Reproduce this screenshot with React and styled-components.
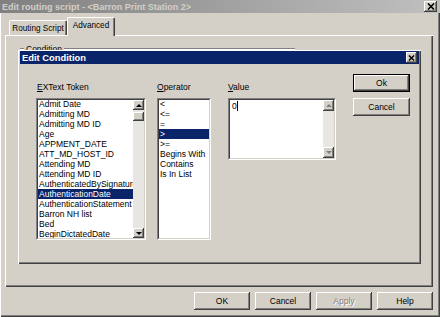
import React from 'react';
import styled, { createGlobalStyle } from 'styled-components';

const face = '#d4d0c8';
const shadow = '#808080';
const dark = '#404040';
const navy = '#0a246a';

const raised = `
  background: ${face};
  box-shadow: inset -1px -1px ${dark}, inset 1px 1px #fff, inset -2px -2px ${shadow}, inset 2px 2px ${face};
`;

const GlobalStyle = createGlobalStyle`
  html, body {
    margin: 0;
    padding: 0;
    background: ${face};
  }
  body {
    font-family: "Liberation Sans", Arial, sans-serif;
    font-size: 8.5px;
    color: #000;
  }
  * {
    box-sizing: border-box;
  }
`;

const Window = styled.div`
  position: relative;
  width: 440px;
  height: 317px;
  display: flex;
  flex-direction: column;
  background: ${face};
  box-shadow: inset 1px 0 #fff, inset -1px -1px ${dark}, inset -2px -2px ${shadow};
`;

const TitleBar = styled.div`
  flex: none;
  height: 13px;
  display: flex;
  align-items: center;
  justify-content: space-between;
  padding: 0 ${p => (p.$active ? 2 : 3)}px 0 2px;
  background: ${p =>
    p.$active ? navy : 'linear-gradient(to right, #808080, #c0c0c0)'};
  color: ${p => (p.$active ? '#fff' : face)};
  font-size: ${p => (p.$active ? 9.4 : 9)}px;
  font-weight: bold;
  white-space: nowrap;
`;

const CloseButton = styled.div`
  ${raised}
  width: ${p => p.$w}px;
  height: ${p => p.$h}px;
  display: flex;
  align-items: center;
  justify-content: center;
  svg {
    display: block;
  }
`;

const Body = styled.div`
  flex: 1;
  display: flex;
  flex-direction: column;
  padding: 4px 7px 7px 5px;
`;

const TabRow = styled.div`
  height: 18px;
  display: flex;
  align-items: flex-end;
  padding-left: 4px;
`;

const Tab = styled.div`
  position: relative;
  width: ${p => p.$w}px;
  height: ${p => (p.$active ? 19 : 15)}px;
  margin-bottom: ${p => (p.$active ? -1 : 0)}px;
  z-index: ${p => (p.$active ? 2 : 0)};
  display: flex;
  align-items: ${p => (p.$active ? 'flex-start' : 'center')};
  justify-content: center;
  padding-top: ${p => (p.$active ? 3 : 0)}px;
  background: ${face};
  border-top: 1px solid #fff;
  border-left: 1px solid #fff;
  border-right: 1px solid ${dark};
  border-radius: 2px 2px 0 0;
  box-shadow: inset -1px 0 ${shadow};
  font-size: 8.2px;
  white-space: nowrap;
`;

const Panel = styled.div`
  position: relative;
  height: 252px;
  background: ${face};
  box-shadow: inset 1px 1px #fff, inset -1px -1px ${dark}, inset -2px -2px ${shadow};
  padding: 9px 0 0 15px;
`;

const GroupHeader = styled.div`
  width: 275px;
  display: flex;
  align-items: center;
`;

const Rule = styled.div`
  flex: ${p => (p.$grow ? 1 : 'none')};
  width: ${p => (p.$grow ? 'auto' : '4px')};
  height: 2px;
  border-top: 1px solid ${shadow};
  border-bottom: 1px solid #fff;
`;

const GroupLabel = styled.span`
  padding: 0 2px;
  line-height: 10px;
`;

const Dialog = styled.div`
  position: absolute;
  left: 13px;
  top: 15px;
  width: 403px;
  height: 214px;
  padding: 1px 2px 2px 2px;
  display: flex;
  flex-direction: column;
  background: ${face};
  box-shadow: inset 1px 1px #fff, inset -1px -1px ${dark}, inset -2px -2px ${shadow};
`;

const DialogContent = styled.div`
  display: flex;
  align-items: flex-start;
  padding: 10px 0 0 16px;
`;

const Column = styled.div`
  width: ${p => p.$w}px;
  margin-left: ${p => p.$ml || 0}px;
  margin-top: 8px;
  display: flex;
  flex-direction: column;
`;

const FieldLabel = styled.div`
  height: 10px;
  line-height: 10px;
  margin-bottom: 6px;
  white-space: nowrap;
  padding-left: ${p => p.$pl || 0}px;
`;

const Field = styled.div`
  height: ${p => p.$h}px;
  border: 1px solid;
  border-color: ${shadow} #fff #fff ${shadow};
`;

const FieldInner = styled.div`
  height: 100%;
  display: flex;
  background: #fff;
  border: 1px solid;
  border-color: ${dark} ${face} ${face} ${dark};
  overflow: hidden;
`;

const Items = styled.div`
  flex: 1;
  min-width: 0;
  margin-top: -1px;
`;

const Item = styled.div`
  height: 10px;
  line-height: 10px;
  padding-left: 1px;
  white-space: nowrap;
  overflow: hidden;
  background: ${p => (p.$selected ? navy : 'transparent')};
  color: ${p => (p.$selected ? '#fff' : '#000')};
`;

const TextArea = styled.div`
  flex: 1;
  padding: 1px 0 0 2px;
  display: flex;
  align-items: flex-start;
  line-height: 10px;
`;

const Caret = styled.span`
  display: inline-block;
  width: 1px;
  height: 10px;
  background: #000;
`;

const ScrollBar = styled.div`
  flex: none;
  width: 11px;
  display: flex;
  flex-direction: column;
  background: #e8e6e2;
`;

const ScrollButton = styled.div`
  ${raised}
  height: ${p => p.$h || 10}px;
  margin-top: ${p => p.$mt || 0}px;
  display: flex;
  align-items: center;
  justify-content: center;
`;

const Track = styled.div`
  flex: 1;
`;

const Arrow = styled.div`
  width: 0;
  height: 0;
  border-left: 3px solid transparent;
  border-right: 3px solid transparent;
  border-${p => (p.$dir === 'up' ? 'bottom' : 'top')}: 3px solid
    ${p => (p.$disabled ? shadow : '#000')};
`;

const ButtonColumn = styled.div`
  width: 57px;
  margin-left: 17px;
  display: flex;
  flex-direction: column;
  gap: 6px;
`;

const Button = styled.div`
  ${raised}
  width: ${p => p.$w}px;
  height: 18px;
  display: flex;
  align-items: center;
  justify-content: center;
  border: ${p => (p.$default ? '1px solid #000' : 'none')};
  color: ${p => (p.$disabled ? shadow : '#000')};
  text-shadow: ${p => (p.$disabled ? '1px 1px #fff' : 'none')};
`;

const Footer = styled.div`
  display: flex;
  justify-content: flex-end;
  gap: 5px;
  margin-top: 5px;
`;

const tokens = [
  'Admit Date',
  'Admitting MD',
  'Admitting MD ID',
  'Age',
  'APPMENT_DATE',
  'ATT_MD_HOST_ID',
  'Attending MD',
  'Attending MD ID',
  'AuthenticatedBySignature',
  'AuthenticationDate',
  'AuthenticationStatement',
  'Barron NH list',
  'Bed',
  'BeginDictatedDate',
];

const operators = ['<', '<=', '=', '>', '>=', 'Begins With', 'Contains', 'Is In List'];

const CloseX = ({ size }) => (
  <svg width={size} height={size - 1} viewBox="0 0 8 7">
    <path d="M1 0.5 L7 6.5 M7 0.5 L1 6.5" stroke="#000" strokeWidth="1.6" />
  </svg>
);

const App = () => (
  <>
    <GlobalStyle />
    <Window>
      <TitleBar>
        <span>Edit routing script - &lt;Barron Print Station 2&gt;</span>
        <CloseButton $w={13} $h={11}>
          <CloseX size={8} />
        </CloseButton>
      </TitleBar>
      <Body>
        <TabRow>
          <Tab $w={58}>Routing Script</Tab>
          <Tab $w={48} $active>
            Advanced
          </Tab>
        </TabRow>
        <Panel>
          <GroupHeader>
            <Rule />
            <GroupLabel>Condition</GroupLabel>
            <Rule $grow />
          </GroupHeader>

          <Dialog>
            <TitleBar $active>
              <span>Edit Condition</span>
              <CloseButton $w={11} $h={11}>
                <CloseX size={7} />
              </CloseButton>
            </TitleBar>
            <DialogContent>
              <Column $w={110}>
                <FieldLabel $pl={1}>
                  <u>E</u>XText Token
                </FieldLabel>
                <Field $h={142}>
                  <FieldInner>
                    <Items>
                      {tokens.map(t => (
                        <Item key={t} $selected={t === 'AuthenticationDate'}>
                          {t}
                        </Item>
                      ))}
                    </Items>
                    <ScrollBar>
                      <ScrollButton>
                        <Arrow $dir="up" />
                      </ScrollButton>
                      <ScrollButton $h={9} $mt={2} />
                      <Track />
                      <ScrollButton>
                        <Arrow $dir="down" />
                      </ScrollButton>
                    </ScrollBar>
                  </FieldInner>
                </Field>
              </Column>

              <Column $w={54} $ml={11}>
                <FieldLabel>
                  <u>O</u>perator
                </FieldLabel>
                <Field $h={142}>
                  <FieldInner>
                    <Items>
                      {operators.map(o => (
                        <Item key={o} $selected={o === '>'}>
                          {o}
                        </Item>
                      ))}
                    </Items>
                  </FieldInner>
                </Field>
              </Column>

              <Column $w={108} $ml={17}>
                <FieldLabel>
                  <u>V</u>alue
                </FieldLabel>
                <Field $h={62}>
                  <FieldInner>
                    <TextArea>
                      0<Caret />
                    </TextArea>
                    <ScrollBar>
                      <ScrollButton $h={11}>
                        <Arrow $dir="up" $disabled />
                      </ScrollButton>
                      <Track />
                      <ScrollButton $h={11}>
                        <Arrow $dir="down" $disabled />
                      </ScrollButton>
                    </ScrollBar>
                  </FieldInner>
                </Field>
              </Column>

              <ButtonColumn>
                <Button $w={57} $default>
                  Ok
                </Button>
                <Button $w={57}>Cancel</Button>
              </ButtonColumn>
            </DialogContent>
          </Dialog>
        </Panel>
        <Footer>
          <Button $w={56}>OK</Button>
          <Button $w={56}>Cancel</Button>
          <Button $w={56} $disabled>
            Apply
          </Button>
          <Button $w={56}>Help</Button>
        </Footer>
      </Body>
    </Window>
  </>
);

export default App;
